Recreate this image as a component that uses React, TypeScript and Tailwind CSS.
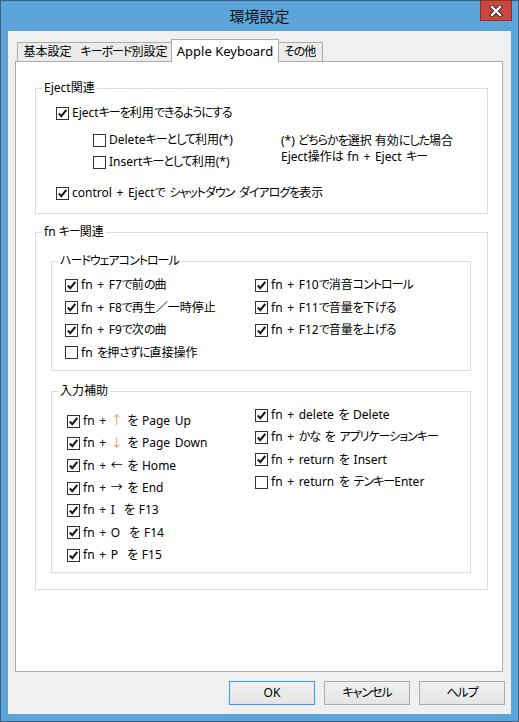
import React from 'react';

type Item = { label: string; checked: boolean };

// かな部分は Meiryo UI に近づけるため少し詰める、↑↓ はオレンジ
function Txt({ s }: { s: string }) {
  const parts = s.split(/([\u3040-\u30ff]+|[↑↓])/).filter((p) => p !== '');
  return (
    <>
      {parts.map((p, i) => {
        if (p === '↑' || p === '↓') return <span key={i} className="text-[#e9973a]">{p}</span>;
        if (/^[\u3040-\u30ff]+$/.test(p)) return <span key={i} className="tracking-[-1px]">{p}</span>;
        return <span key={i}>{p}</span>;
      })}
    </>
  );
}

function Box({ checked }: { checked: boolean }) {
  return (
    <span className="w-[13px] h-[13px] shrink-0 border border-[#333333] bg-white flex items-center justify-center">
      {checked && (
        <svg width="11" height="11" viewBox="0 0 11 11">
          <path d="M1.8 5.6 L4.3 8.2 L9.3 1.8" fill="none" stroke="#1a1a1a" strokeWidth="2.1" />
        </svg>
      )}
    </span>
  );
}

function Check({ item, h = 'h-[16px]' }: { item: Item; h?: string }) {
  return (
    <div className={`flex items-center gap-[3px] ${h}`}>
      <Box checked={item.checked} />
      <span className="whitespace-pre leading-[16px] [word-spacing:1.5px]">
        <Txt s={item.label} />
      </span>
    </div>
  );
}

function Group({ title, className, children }: { title: string; className: string; children: React.ReactNode }) {
  return (
    <fieldset className={`border border-[#dcdcdc] ${className}`}>
      <legend className="ml-[6px] px-[2px] leading-[16px]">
        <Txt s={title} />
      </legend>
      {children}
    </fieldset>
  );
}

export default function App() {
  const hwLeft: Item[] = [
    { label: 'fn + F7で前の曲', checked: true },
    { label: 'fn + F8で再生／一時停止', checked: true },
    { label: 'fn + F9で次の曲', checked: true },
    { label: 'fn を押さずに直接操作', checked: false },
  ];
  const hwRight: Item[] = [
    { label: 'fn + F10で消音コントロール', checked: true },
    { label: 'fn + F11で音量を下げる', checked: true },
    { label: 'fn + F12で音量を上げる', checked: true },
  ];
  const inLeft: Item[] = [
    { label: 'fn + ↑ を Page Up', checked: true },
    { label: 'fn + ↓ を Page Down', checked: true },
    { label: 'fn + ← を Home', checked: true },
    { label: 'fn + → を End', checked: true },
    { label: 'fn + I  を F13', checked: true },
    { label: 'fn + O  を F14', checked: true },
    { label: 'fn + P  を F15', checked: true },
  ];
  const inRight: Item[] = [
    { label: 'fn + delete を Delete', checked: true },
    { label: 'fn + かな を アプリケーションキー', checked: true },
    { label: 'fn + return を Insert', checked: true },
    { label: 'fn + return を テンキーEnter', checked: false },
  ];

  const tab = 'h-[19px] border-t border-r border-[#acacac] bg-[#ececec] flex items-center justify-center';
  const btn = 'w-[86px] h-[24px] border bg-gradient-to-b from-[#f0f0f0] to-[#e5e5e5]';

  return (
    <div className="w-[519px] h-[722px] bg-[#5ca5da] border border-[#3b5f7c] flex flex-col text-[12px] text-black font-['Noto_Sans','Noto_Sans_CJK_JP',sans-serif] [font-feature-settings:'palt']">
      {/* タイトルバー */}
      <div className="h-[30px] relative flex items-center justify-center">
        <span className="text-[15px] text-[#111] mt-[1px]">環境設定</span>
        <div className="absolute right-[6px] top-[-1px] w-[32px] h-[21px] bg-[#c9483e] border border-[#8e2e27] flex items-center justify-center">
          <svg width="14" height="12" viewBox="0 0 14 12">
            <path d="M3 2 L11 10 M11 2 L3 10" stroke="#3a1a18" strokeWidth="4.2" strokeLinecap="square" />
            <path d="M3 2 L11 10 M11 2 L3 10" stroke="#ffffff" strokeWidth="2.4" strokeLinecap="square" />
          </svg>
        </div>
      </div>

      {/* クライアント領域 */}
      <div className="mx-[7px] mb-[7px] flex-1 bg-[#f0f0f0] flex flex-col">
        {/* タブ */}
        <div className="mt-[8px] ml-[9px] h-[22px] flex items-end">
          <div className={`w-[61px] border-l ${tab}`}>基本設定</div>
          <div className={`-ml-[1px] w-[95px] ${tab}`}>
            <Txt s="キーボード別設定" />
          </div>
          <div className="-ml-[1px] w-[108px] h-[23px] -mb-[1px] relative z-10 border-l border-t border-r border-[#acacac] bg-white flex items-start justify-center pt-[2px] text-[13px]">
            Apple Keyboard
          </div>
          <div className={`-ml-[1px] w-[45px] ${tab}`}>
            <Txt s="その他" />
          </div>
        </div>

        {/* パネル */}
        <div className="ml-[7px] w-[488px] h-[611px] border border-[#acacac] bg-white pt-[18px] pl-[19px]">
          <Group title="Eject関連" className="w-[453px]">
            <div className="pl-[20px] pb-[12px]">
              <div className="mt-[9px]">
                <Check item={{ label: 'Ejectキーを利用できるようにする', checked: true }} />
              </div>
              <div className="mt-[11px] ml-[37px] flex">
                <div className="w-[188px] flex flex-col gap-[6px]">
                  <Check item={{ label: 'Deleteキーとして利用(*)', checked: false }} />
                  <Check item={{ label: 'Insertキーとして利用(*)', checked: false }} />
                </div>
                <div className="mt-[1px] leading-[16px] whitespace-nowrap">
                  <div>
                    <Txt s="(*) どちらかを選択 有効にした場合" />
                  </div>
                  <div className="[word-spacing:1.5px]">
                    <Txt s="Eject操作は fn + Eject キー" />
                  </div>
                </div>
              </div>
              <div className="mt-[15px]">
                <Check item={{ label: 'control + Ejectで シャットダウン ダイアログを表示', checked: true }} />
              </div>
            </div>
          </Group>

          <Group title="fn キー関連" className="mt-[10px] w-[453px]">
            <div className="pb-[16px]">
              <Group title="ハードウェアコントロール" className="mt-[13px] ml-[15px] w-[420px]">
                <div className="mt-[5px] pl-[13px] pb-[6px] flex">
                  <div className="w-[190px] flex flex-col">
                    {hwLeft.map((it, i) => (
                      <Check key={i} item={it} h="h-[22.5px]" />
                    ))}
                  </div>
                  <div className="flex flex-col">
                    {hwRight.map((it, i) => (
                      <Check key={i} item={it} h="h-[22.5px]" />
                    ))}
                  </div>
                </div>
              </Group>

              <Group title="入力補助" className="mt-[12px] ml-[15px] w-[420px]">
                <div className="pl-[15px] pb-[6px] flex">
                  <div className="mt-[11px] w-[188px] flex flex-col">
                    {inLeft.map((it, i) => (
                      <Check key={i} item={it} h="h-[22.33px]" />
                    ))}
                  </div>
                  <div className="mt-[5px] flex flex-col">
                    {inRight.map((it, i) => (
                      <Check key={i} item={it} h="h-[22.33px]" />
                    ))}
                  </div>
                </div>
              </Group>
            </div>
          </Group>
        </div>

        {/* ボタン */}
        <div className="mt-[9px] pr-[6px] flex justify-end gap-[9px]">
          <button className={`${btn} border-[#3399ff]`}>OK</button>
          <button className={`${btn} border-[#acacac]`}>
            <Txt s="キャンセル" />
          </button>
          <button className={`${btn} border-[#acacac]`}>
            <Txt s="ヘルプ" />
          </button>
        </div>
      </div>
    </div>
  );
}
